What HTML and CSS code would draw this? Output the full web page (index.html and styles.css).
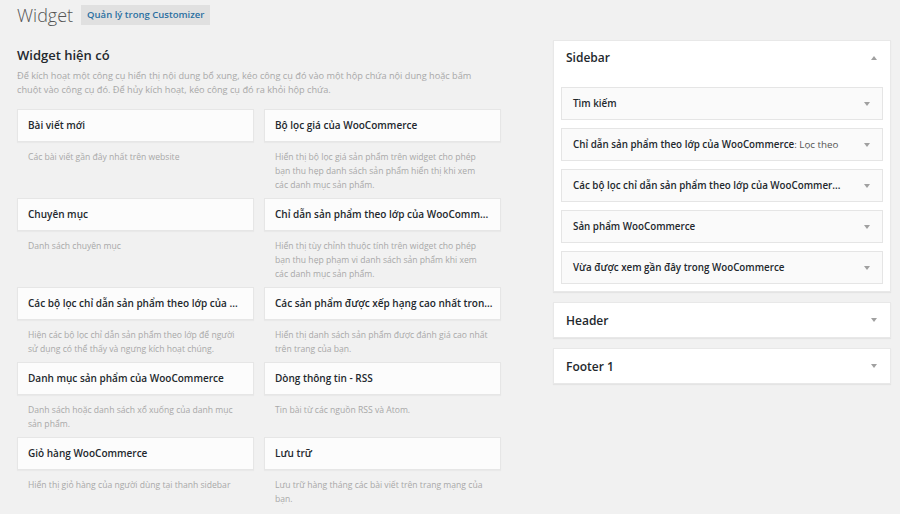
FILE: index.html
```html
<!DOCTYPE html>
<html lang="vi">
<head>
<meta charset="utf-8">
<title>Widget</title>
<link rel="stylesheet" href="styles.css">
</head>
<body>
<div class="wrap">
  <header class="page-head">
    <h1 class="page-title">Widget</h1>
    <a class="title-action">Quản lý trong Customizer</a>
  </header>
  <div class="main">
    <section class="available">
      <h2 class="section-title">Widget hiện có</h2>
      <p class="section-desc">Để kích hoạt một công cụ hiển thị nội dung bổ xung, kéo công cụ đó vào một hộp chứa nội dung hoặc bấm chuột vào công cụ đó. Để hủy kích hoạt, kéo công cụ đó ra khỏi hộp chứa.</p>
      <div class="widget-grid">
        <div class="widget">
          <div class="widget-card">Bài viết mới</div>
          <p class="widget-desc">Các bài viết gần đây nhất trên website</p>
        </div>
        <div class="widget">
          <div class="widget-card">Bộ lọc giá của WooCommerce</div>
          <p class="widget-desc">Hiển thị bộ lọc giá sản phẩm trên widget cho phép bạn thu hẹp danh sách sản phẩm hiển thị khi xem các danh mục sản phẩm.</p>
        </div>
        <div class="widget">
          <div class="widget-card">Chuyên mục</div>
          <p class="widget-desc">Danh sách chuyên mục</p>
        </div>
        <div class="widget">
          <div class="widget-card">Chỉ dẫn sản phẩm theo lớp của WooComm...</div>
          <p class="widget-desc">Hiển thị tùy chỉnh thuộc tính trên widget cho phép bạn thu hẹp phạm vi danh sách sản phẩm khi xem các danh mục sản phẩm.</p>
        </div>
        <div class="widget">
          <div class="widget-card">Các bộ lọc chỉ dẫn sản phẩm theo lớp của ...</div>
          <p class="widget-desc">Hiện các bộ lọc chỉ dẫn sản phẩm theo lớp để người sử dụng có thể thấy và ngưng kích hoạt chúng.</p>
        </div>
        <div class="widget">
          <div class="widget-card">Các sản phẩm được xếp hạng cao nhất tron...</div>
          <p class="widget-desc">Hiển thị danh sách sản phẩm được đánh giá cao nhất trên trang của bạn.</p>
        </div>
        <div class="widget">
          <div class="widget-card">Danh mục sản phẩm của WooCommerce</div>
          <p class="widget-desc">Danh sách hoặc danh sách xổ xuống của danh mục sản phẩm.</p>
        </div>
        <div class="widget">
          <div class="widget-card">Dòng thông tin - RSS</div>
          <p class="widget-desc">Tin bài từ các nguồn RSS và Atom.</p>
        </div>
        <div class="widget">
          <div class="widget-card">Giỏ hàng WooCommerce</div>
          <p class="widget-desc">Hiển thị giỏ hàng của người dùng tại thanh sidebar</p>
        </div>
        <div class="widget">
          <div class="widget-card">Lưu trữ</div>
          <p class="widget-desc">Lưu trữ hàng tháng các bài viết trên trang mạng của bạn.</p>
        </div>
      </div>
    </section>
    <aside class="areas">
      <div class="area open">
        <div class="area-head">
          <h3 class="area-title">Sidebar</h3>
          <span class="arrow up"></span>
        </div>
        <div class="area-list">
          <div class="area-item"><span class="item-title">Tìm kiếm</span><span class="arrow down"></span></div>
          <div class="area-item"><span class="item-title">Chỉ dẫn sản phẩm theo lớp của WooCommerce<span class="in-title">: Lọc theo</span></span><span class="arrow down"></span></div>
          <div class="area-item"><span class="item-title">Các bộ lọc chỉ dẫn sản phẩm theo lớp của WooCommer...</span><span class="arrow down"></span></div>
          <div class="area-item"><span class="item-title">Sản phẩm WooCommerce</span><span class="arrow down"></span></div>
          <div class="area-item"><span class="item-title">Vừa được xem gần đây trong WooCommerce</span><span class="arrow down"></span></div>
        </div>
      </div>
      <div class="area">
        <div class="area-head closed">
          <h3 class="area-title">Header</h3>
          <span class="arrow down"></span>
        </div>
      </div>
      <div class="area">
        <div class="area-head closed">
          <h3 class="area-title">Footer 1</h3>
          <span class="arrow down"></span>
        </div>
      </div>
    </aside>
  </div>
</div>
</body>
</html>
```

FILE: styles.css
```css
* { box-sizing: border-box; }
html, body { margin: 0; padding: 0; }
body {
  background: #f1f1f1;
  font-family: "Open Sans", "Noto Sans", sans-serif;
  color: #333;
  width: 900px;
  height: 514px;
  overflow: hidden;
}
.wrap { padding: 0 9px 0 17px; }

.page-head {
  display: flex;
  align-items: center;
  gap: 8px;
  height: 40px;
  padding-bottom: 10px;
}
.page-title {
  margin: 0;
  font-size: 18px;
  font-weight: 300;
  line-height: 30px;
  color: #555;
}
.title-action {
  display: inline-block;
  background: #e0e0e0;
  color: #2a6fa0;
  font-size: 9.5px;
  font-weight: 600;
  line-height: 20px;
  padding: 0 6px;
}

.main {
  display: flex;
  justify-content: space-between;
  align-items: flex-start;
}
.available { width: 484px; }
.section-title {
  margin: 5px 0 0;
  font-size: 13px;
  font-weight: 600;
  line-height: 20px;
  color: #23282d;
}
.section-desc {
  max-width: 470px;
  margin: 4px 0 12px;
  font-size: 9.2px;
  line-height: 14px;
  color: #a8a8a8;
}
.widget-grid {
  display: grid;
  grid-template-columns: 237px 237px;
  column-gap: 10px;
}
.widget-card {
  height: 33px;
  background: #fcfcfc;
  border: 1px solid #e6e6e6;
  box-shadow: 0 1px 1px rgba(0,0,0,0.03);
  padding: 0 10px;
  font-size: 10px;
  font-weight: 600;
  line-height: 31px;
  color: #23282d;
  white-space: nowrap;
  overflow: hidden;
}
.widget-desc {
  margin: 0;
  padding: 8px 12px 6px 11px;
  font-size: 8.6px;
  line-height: 14px;
  color: #a8a8a8;
}

.areas {
  width: 338px;
  display: flex;
  flex-direction: column;
  gap: 10px;
}
.area {
  background: #fff;
  box-shadow: 0 1px 1px rgba(0,0,0,0.05);
  border: 1px solid #e8e8e8;
}
.area.open { padding: 0 7px 7px; }
.area-head {
  display: flex;
  align-items: center;
  justify-content: space-between;
  height: 46px;
  padding: 0 6px 13px 5px;
}
.area-head.closed {
  height: 34px;
  padding: 0 13px 0 12px;
}
.area-title {
  margin: 0;
  font-size: 12px;
  font-weight: 600;
  color: #23282d;
}
.area-list {
  display: flex;
  flex-direction: column;
  gap: 8px;
}
.area-item {
  height: 33px;
  display: flex;
  align-items: center;
  justify-content: space-between;
  background: #fafafa;
  border: 1px solid #e5e5e5;
  padding: 0 12px 0 11px;
}
.item-title {
  font-size: 9.8px;
  font-weight: 600;
  color: #23282d;
  white-space: nowrap;
}
.in-title { font-weight: 400; color: #555; }
.arrow {
  width: 0;
  height: 0;
  border-left: 3px solid transparent;
  border-right: 3px solid transparent;
}
.arrow.down { border-top: 4px solid #a0a0a0; }
.arrow.up { border-bottom: 4px solid #a0a0a0; }
```
